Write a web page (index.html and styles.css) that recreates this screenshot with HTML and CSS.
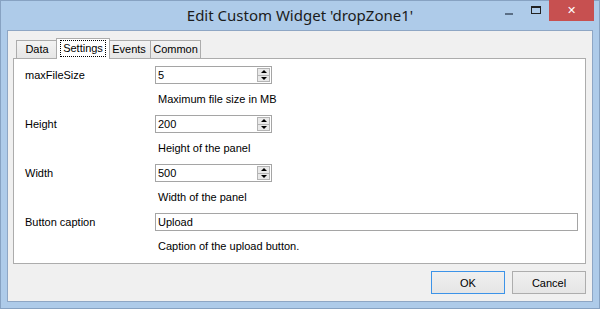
FILE: index.html
```html
<!DOCTYPE html>
<html lang="en">
<head>
  <meta charset="UTF-8">
  <title>Edit Custom Widget</title>
  <link rel="stylesheet" href="styles.css">
</head>
<body>
  <div class="window">
    <div class="titlebar">
      <div></div>
      <div class="title">Edit Custom Widget 'dropZone1'</div>
      <div class="caption-buttons">
        <span class="cap-btn minimize"><i></i></span>
        <span class="cap-btn maximize"><i></i></span>
        <span class="cap-btn close">&#x2715;</span>
      </div>
    </div>

    <div class="client">
      <div class="tabs">
        <div class="tab tab-data">Data</div>
        <div class="tab tab-settings active"><span class="focus">Settings</span></div>
        <div class="tab tab-events">Events</div>
        <div class="tab tab-common">Common</div>
      </div>

      <div class="page">
        <div class="row">
          <div class="label">maxFileSize</div>
          <div class="field">
            <div class="spin">
              <span class="value">5</span>
              <span class="spin-btns"><span class="up"></span><span class="down"></span></span>
            </div>
            <div class="desc">Maximum file size in MB</div>
          </div>
        </div>
        <div class="row">
          <div class="label">Height</div>
          <div class="field">
            <div class="spin">
              <span class="value">200</span>
              <span class="spin-btns"><span class="up"></span><span class="down"></span></span>
            </div>
            <div class="desc">Height of the panel</div>
          </div>
        </div>
        <div class="row">
          <div class="label">Width</div>
          <div class="field">
            <div class="spin">
              <span class="value">500</span>
              <span class="spin-btns"><span class="up"></span><span class="down"></span></span>
            </div>
            <div class="desc">Width of the panel</div>
          </div>
        </div>
        <div class="row">
          <div class="label">Button caption</div>
          <div class="field">
            <div class="textbox">Upload</div>
            <div class="desc">Caption of the upload button.</div>
          </div>
        </div>
      </div>

      <div class="footer">
        <button class="btn default">OK</button>
        <button class="btn">Cancel</button>
      </div>
    </div>
  </div>
</body>
</html>
```

FILE: styles.css
```css
body {
  margin: 0;
  font-family: "Liberation Sans", Arial, sans-serif;
  font-size: 11px;
  color: #000;
}
.window {
  width: 600px;
  height: 309px;
  box-sizing: border-box;
  background-color: #aecbe9;
  border: 1px solid #87a2c2;
  display: flex;
  flex-direction: column;
}
.titlebar {
  height: 29px;
  display: grid;
  grid-template-columns: 1fr auto 1fr;
  align-items: start;
}
.title {
  font-family: "Noto Sans", "Open Sans", sans-serif;
  font-size: 15px;
  line-height: 29px;
  color: #1b1b1b;
}
.caption-buttons {
  justify-self: end;
  display: flex;
  margin-top: -1px;
  margin-right: 5px;
}
.cap-btn {
  height: 21px;
  display: flex;
  align-items: center;
  justify-content: center;
}
.minimize {
  width: 26px;
}
.minimize i {
  display: block;
  width: 8px;
  height: 2px;
  margin-top: 6px;
  background-color: #5b6f86;
}
.maximize {
  width: 27px;
}
.maximize i {
  display: block;
  width: 10px;
  height: 8px;
  box-sizing: border-box;
  border: 1px solid #222;
  border-top-width: 2px;
  margin-top: -1px;
}
.close {
  width: 45px;
  background-color: #c75050;
  color: #fff;
  font-family: "DejaVu Sans", sans-serif;
  font-size: 11px;
  font-weight: bold;
}
.client {
  flex: 1;
  margin: 0 6px 6px;
  border: 1px solid #8ea6c4;
  background-color: #f0f0f0;
  display: flex;
  flex-direction: column;
}
.tabs {
  display: flex;
  align-items: flex-end;
  height: 20px;
  margin: 7px 0 0 8px;
}
.tab {
  box-sizing: border-box;
  height: 18px;
  border: 1px solid #acacac;
  border-bottom: none;
  background: linear-gradient(#f3f3f3, #e6e6e6);
  text-align: center;
  line-height: 17px;
}
.tab-data { width: 42px; }
.tab-events { width: 44px; margin-left: -1px; }
.tab-common { width: 51px; margin-left: -1px; }
.tab.active {
  width: 54px;
  height: 21px;
  margin: 0 -2px -1px -2px;
  background: #fff;
  position: relative;
  z-index: 1;
  padding-top: 2px;
  line-height: 14px;
}
.focus {
  display: inline-block;
  outline: 1px dotted #000;
  padding: 0 2px 1px;
}
.page {
  margin: 0 6px 0 5px;
  height: 206px;
  box-sizing: border-box;
  border: 1px solid #acacac;
  background-color: #fff;
  padding: 7px 7px 0 11px;
  display: flex;
  flex-direction: column;
  gap: 9px;
}
.row {
  display: grid;
  grid-template-columns: 130px 1fr;
}
.label {
  line-height: 18px;
}
.spin {
  width: 117px;
  height: 18px;
  box-sizing: border-box;
  border: 1px solid #a5a5a5;
  display: flex;
  background-color: #fff;
}
.value {
  flex: 1;
  padding-left: 2px;
  line-height: 16px;
}
.spin-btns {
  width: 13px;
  margin: 1px 1px 1px 0;
  display: flex;
  flex-direction: column;
}
.spin-btns span {
  flex: 1;
  box-sizing: border-box;
  border: 1px solid #b4b4b4;
  background-color: #e9e9e9;
  display: flex;
  align-items: center;
  justify-content: center;
}
.spin-btns span + span {
  border-top: none;
}
.up::before {
  content: "";
  border-left: 3px solid transparent;
  border-right: 3px solid transparent;
  border-bottom: 3px solid #000;
}
.down::before {
  content: "";
  border-left: 3px solid transparent;
  border-right: 3px solid transparent;
  border-top: 3px solid #000;
}
.textbox {
  height: 18px;
  box-sizing: border-box;
  border: 1px solid #a5a5a5;
  padding-left: 2px;
  line-height: 16px;
}
.desc {
  margin-top: 8px;
  padding-left: 3px;
  line-height: 14px;
}
.footer {
  display: flex;
  justify-content: flex-end;
  gap: 7px;
  margin: 7px 6px 0 0;
}
.btn {
  width: 74px;
  height: 23px;
  border: 1px solid #adadad;
  background: linear-gradient(#f0f0f0, #e5e5e5);
  font-family: "Liberation Sans", Arial, sans-serif;
  font-size: 11px;
  color: #000;
  padding: 0;
}
.btn.default {
  border-color: #3c93e8;
}
```
